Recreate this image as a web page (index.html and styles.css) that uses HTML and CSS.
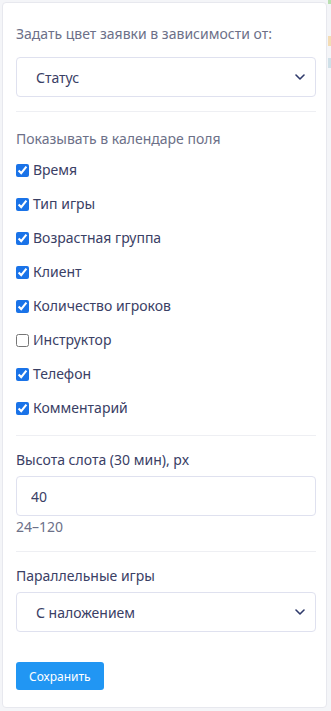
FILE: index.html
```html
<!DOCTYPE html>
<html lang="ru">
<head>
    <meta charset="UTF-8">
    <meta name="viewport" content="width=device-width, initial-scale=1.0">
    <title>Настройки календаря</title>
    <link rel="stylesheet" href="styles.css">
</head>
<body>

<div class="backdrop">
    <span class="peek peek-green"></span>
    <span class="peek peek-orange"></span>
    <span class="peek peek-blue"></span>
</div>

<div class="panel">
    <div class="section">
        <div class="label">Задать цвет заявки в зависимости от:</div>
        <div class="select-wrap">
            <select class="control">
                <option>Статус</option>
                <option>Тип игры</option>
                <option>Инструктор</option>
            </select>
            <svg class="chevron" width="10" height="6" viewBox="0 0 10 6"><path d="M1 1l4 4 4-4" fill="none" stroke="#2f3a6b" stroke-width="1.6" stroke-linecap="round" stroke-linejoin="round"/></svg>
        </div>
    </div>

    <div class="section fields">
        <div class="label">Показывать в календаре поля</div>
        <label class="check"><input type="checkbox" checked> Время</label>
        <label class="check"><input type="checkbox" checked> Тип игры</label>
        <label class="check"><input type="checkbox" checked> Возрастная группа</label>
        <label class="check"><input type="checkbox" checked> Клиент</label>
        <label class="check"><input type="checkbox" checked> Количество игроков</label>
        <label class="check"><input type="checkbox"> Инструктор</label>
        <label class="check"><input type="checkbox" checked> Телефон</label>
        <label class="check"><input type="checkbox" checked> Комментарий</label>
    </div>

    <div class="section">
        <div class="label dark">Высота слота (30 мин), px</div>
        <input class="control" type="text" value="40">
        <div class="hint">24–120</div>
    </div>

    <div class="section last">
        <div class="label dark">Параллельные игры</div>
        <div class="select-wrap">
            <select class="control">
                <option>С наложением</option>
                <option>Рядом</option>
            </select>
            <svg class="chevron" width="10" height="6" viewBox="0 0 10 6"><path d="M1 1l4 4 4-4" fill="none" stroke="#2f3a6b" stroke-width="1.6" stroke-linecap="round" stroke-linejoin="round"/></svg>
        </div>
    </div>

    <button class="button">Сохранить</button>
</div>

</body>
</html>
```

FILE: styles.css
```css
body {
    margin: 0;
    font-family: "Noto Sans", "Open Sans", sans-serif;
    background-color: #f4f5f8;
    color: #3a4065;
}
.backdrop {
    position: absolute;
    top: 0;
    right: 0;
    width: 4px;
    height: 100%;
}
.peek {
    position: absolute;
    right: 0;
    width: 3px;
}
.peek-green {
    top: 0;
    height: 4px;
    background-color: #b9dfb0;
}
.peek-orange {
    top: 36px;
    height: 10px;
    background-color: #f4dcb4;
}
.peek-blue {
    top: 58px;
    height: 10px;
    background-color: #cfe0e8;
}
.panel {
    position: relative;
    margin: 2px;
    width: 325px;
    box-sizing: border-box;
    background-color: #fff;
    border: 1px solid #e7e8ee;
    border-radius: 4px;
    padding: 21px 10px 17px 13px;
}
.section {
    border-bottom: 1px solid #eeeff3;
    padding-bottom: 14px;
    margin-bottom: 14px;
}
.section.last {
    border-bottom: none;
    padding-bottom: 0;
    margin-bottom: 30px;
}
.fields {
    padding-top: 3px;
    padding-bottom: 17px;
}
.label {
    font-size: 14px;
    line-height: 20px;
    color: #6c7088;
    margin-bottom: 13px;
}
.fields .label {
    margin-bottom: 11px;
}
.label.dark {
    color: #3a4065;
    margin-bottom: 6px;
}
.select-wrap {
    position: relative;
}
.control {
    display: block;
    width: 100%;
    height: 40px;
    box-sizing: border-box;
    border: 1px solid #dfe1ef;
    border-radius: 4px;
    background-color: #fff;
    font-family: inherit;
    font-size: 14px;
    color: #3a4065;
    padding: 0 14px;
    outline: none;
}
select.control {
    appearance: none;
    -webkit-appearance: none;
    padding-left: 19px;
}
.chevron {
    position: absolute;
    right: 11px;
    top: 17px;
    pointer-events: none;
}
.check {
    display: flex;
    align-items: center;
    gap: 4px;
    font-size: 14px;
    line-height: 20px;
    height: 20px;
    margin-bottom: 14px;
    color: #3a4065;
    cursor: pointer;
}
.check:last-child {
    margin-bottom: 0;
}
.check input {
    margin: 0;
    width: 13px;
    height: 13px;
    accent-color: #1a73e8;
}
.hint {
    font-size: 14px;
    line-height: 20px;
    color: #6c7088;
    margin-top: 1px;
}
.button {
    display: block;
    padding: 0 13px;
    height: 28px;
    font-family: inherit;
    font-size: 12px;
    background-color: #2196f3;
    color: #fff;
    border: none;
    border-radius: 3px;
    cursor: pointer;
}
.button:hover {
    background-color: #1c86da;
}
```
